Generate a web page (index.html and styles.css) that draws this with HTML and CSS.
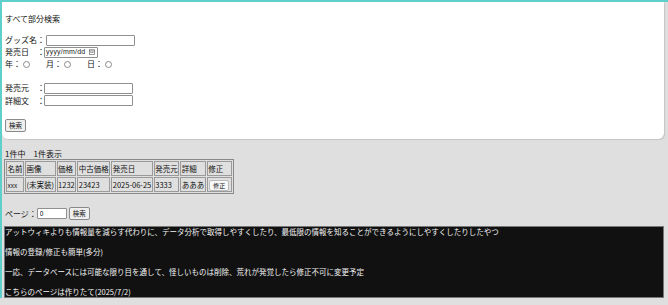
FILE: index.html
```html
<!DOCTYPE html>
<html lang="ja">
<head>
    <meta charset="UTF-8">
    <title>グッズ検索</title>
    <link rel="stylesheet" href="styles.css">
</head>
<body>
    <!-- 検索フォーム -->
    <div class="search-panel">
        <p class="panel-title">すべて部分検索</p>

        <div class="form-group">
            <div class="form-row">
                <span class="label">グッズ名：</span>
                <input type="text" class="text-input">
            </div>
            <div class="form-row">
                <span class="label">発売日　：</span>
                <div class="date-input">
                    <span>yyyy/mm/dd</span>
                    <svg width="6" height="6" viewBox="0 0 6 6">
                        <rect x="0.5" y="0.8" width="5" height="4.7" fill="none" stroke="#666" stroke-width="0.7"/>
                        <line x1="0.5" y1="2" x2="5.5" y2="2" stroke="#666" stroke-width="0.7"/>
                        <rect x="1.5" y="3" width="1" height="1" fill="#666"/>
                        <rect x="3.3" y="3" width="1" height="1" fill="#666"/>
                    </svg>
                </div>
            </div>
            <div class="form-row radio-row">
                <label>年：<input type="radio" name="date-mode"></label>
                <label>月：<input type="radio" name="date-mode"></label>
                <label>日：<input type="radio" name="date-mode"></label>
            </div>
        </div>

        <div class="form-group second">
            <div class="form-row">
                <span class="label">発売元　：</span>
                <input type="text" class="text-input">
            </div>
            <div class="form-row">
                <span class="label">詳細文　：</span>
                <input type="text" class="text-input">
            </div>
        </div>

        <button class="small-btn search-btn">検索</button>
    </div>

    <!-- 検索結果 -->
    <div class="results">
        <p class="result-count">1件中　1件表示</p>
        <table class="result-table">
            <tr>
                <td>名前</td>
                <td>画像</td>
                <td>価格</td>
                <td>中古価格</td>
                <td>発売日</td>
                <td>発売元</td>
                <td>詳細</td>
                <td>修正</td>
            </tr>
            <tr>
                <td class="name-cell">xxx</td>
                <td>(未実装)</td>
                <td>1232</td>
                <td>23423</td>
                <td>2025-06-25</td>
                <td>3333</td>
                <td>あああ</td>
                <td><button class="small-btn edit-btn">修正</button></td>
            </tr>
        </table>

        <div class="pager">
            <span>ページ：</span>
            <input type="text" class="page-input" value="0">
            <button class="small-btn">検索</button>
        </div>

        <div class="notice">
            <p>アットウィキよりも情報量を減らす代わりに、データ分析で取得しやすくしたり、最低限の情報を知ることができるようにしやすくしたりしたやつ</p>
            <p>情報の登録/修正も簡単(多分)</p>
            <p>一応、データベースには可能な限り目を通して、怪しいものは削除、荒れが発覚したら修正不可に変更予定</p>
            <p>こちらのページは作りたて(2025/7/2)</p>
        </div>
    </div>
</body>
</html>
```

FILE: styles.css
```css
body {
    margin: 0;
    background: #dfdfdf;
    border-top: 2px solid #5ecfcb;
    border-left: 2px solid #5ecfcb;
    padding-right: 4px;
    color: #111;
    font-family: "Noto Sans CJK JP", sans-serif;
    font-size: 8px;
    line-height: 12px;
}

p {
    margin: 0;
}

.search-panel {
    background: #fff;
    border-radius: 0 0 6px 6px;
    box-shadow: 1px 1px 1px rgba(0,0,0,0.12);
    padding: 11px 3px 7px;
}

.panel-title {
    margin-bottom: 9px;
}

.form-row {
    display: flex;
    align-items: center;
    height: 12px;
}

.second {
    margin-top: 12px;
}

.second .form-row {
    height: 12.5px;
}

.label {
    white-space: nowrap;
}

.text-input {
    box-sizing: border-box;
    width: 89px;
    height: 11px;
    margin: 0 0 0 1px;
    padding: 0 2px;
    border: 1px solid #8f8f8f;
    border-radius: 1px;
    font-size: 7px;
}

.second .text-input {
    margin-left: -1px;
}

.date-input {
    box-sizing: border-box;
    display: flex;
    align-items: center;
    justify-content: space-between;
    width: 54px;
    height: 11px;
    margin-left: -1px;
    padding: 0 2px 0 1px;
    border: 1px solid #8f8f8f;
    border-radius: 1px;
    font-family: "Liberation Sans", sans-serif;
    font-size: 7px;
    letter-spacing: 0.2px;
    color: #222;
}

.radio-row label {
    display: flex;
    align-items: center;
    margin-right: 16px;
}

.radio-row input {
    appearance: none;
    width: 7px;
    height: 7px;
    margin: 0 0 0 2px;
    border: 1px solid #8a8a8a;
    border-radius: 50%;
    background: #fff;
}

.small-btn {
    background: #efefef;
    border: 1px solid #8a8a8a;
    border-radius: 2px;
    padding: 0 3px;
    height: 13px;
    font-family: "Noto Sans CJK JP", sans-serif;
    font-size: 6.5px;
    line-height: 11px;
    color: #111;
}

.search-btn {
    margin-top: 12px;
    display: block;
}

.results {
    padding-left: 2px;
}

.result-count {
    margin-top: 10px;
    line-height: 10px;
    padding-left: 1px;
}

.result-table {
    border: 1px solid #8a8a8a;
    border-spacing: 1px;
    font-size: 7.5px;
    line-height: 12px;
}

.result-table td {
    border: 1px solid #9a9a9a;
    padding: 1px 0.5px 0;
    height: 12px;
    white-space: nowrap;
}

.name-cell {
    font-size: 6.5px;
}

.edit-btn {
    background: #f8f8f8;
    height: 11px;
    margin: 0 1px;
    border-color: #bbb;
    font-size: 6px;
    line-height: 9px;
}

.pager {
    display: flex;
    align-items: center;
    margin-top: 13px;
    height: 13px;
    padding-left: 1px;
}

.page-input {
    box-sizing: border-box;
    width: 30px;
    height: 11px;
    margin: 0 2px 0 0;
    padding: 0 2px;
    border: 1px solid #8f8f8f;
    border-radius: 1px;
    font-size: 6.5px;
}

.notice {
    margin-top: 6px;
    background: #111;
    border: 1px solid #777;
    color: #f4f4f4;
    font-size: 7.5px;
    line-height: 10px;
}

.notice p {
    margin-bottom: 10px;
}

.notice p:last-child {
    margin-bottom: 0;
}
```
